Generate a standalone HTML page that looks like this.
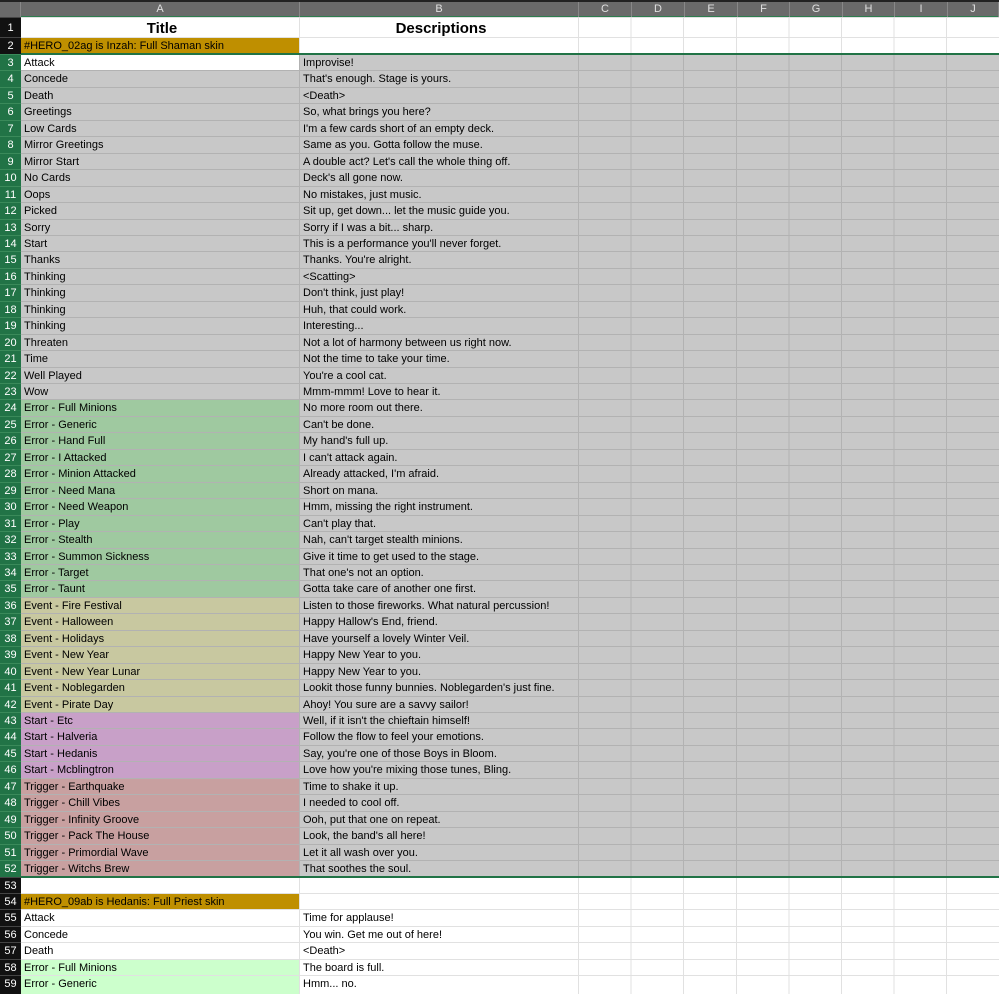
<!DOCTYPE html>
<html><head><meta charset="utf-8"><style>
*{margin:0;padding:0;box-sizing:border-box}
body{width:999px;height:994px;overflow:hidden;background:#fff;font-family:"Liberation Sans",sans-serif;font-size:11px;color:#000;position:relative}
#top{position:absolute;left:0;top:0;width:999px;height:2px;background:#222}
#hdr{position:absolute;left:0;top:2px;width:999px;height:15px;background:#6a6a6a;border-bottom:1px solid #2e7d4f;color:#e0e0e0;font-size:11px;line-height:15px}
#hdr div{position:absolute;top:0;height:15px;text-align:center;border-right:1px solid #888}
#corner{left:0;width:21px;background:#6a6a6a}
.r{position:absolute;left:0;width:999px;height:17px;display:flex;line-height:17px;white-space:nowrap}
.n{width:21px;flex:none;text-align:center;color:#fff;background:#111;box-shadow:inset 0 1px 0 #444;padding-top:1px}
.s .n{background:#217346;box-shadow:inset 0 1px 0 #3a8a5a}
.a,.b{flex:none;width:279px;padding-left:3px;padding-top:1px;overflow:hidden;box-shadow:inset -1px 1px 0 #e1e1e1}
.rest{flex:1;background:repeating-linear-gradient(to right,transparent 0 51.6px,#e1e1e1 51.6px 52.6px);box-shadow:inset 0 1px 0 #e1e1e1}
.s .a,.s .b{background:#c8c8c8;box-shadow:inset -1px 1px 0 #b2b2b2}
.s .rest{background:#c8c8c8 repeating-linear-gradient(to right,transparent 0 51.6px,#b2b2b2 51.6px 52.6px);box-shadow:inset 0 1px 0 #b2b2b2}
.s .a.wh{background:#fff}
.s .a.g{background:#9fc9a0}
.s .a.e{background:#c8c8a0}
.s .a.p{background:#c8a0c8}
.s .a.t{background:#c8a0a0}
.a.o{background:#bf8f00}
.a.lg{background:#ccffcc}
.line{position:absolute;left:21px;width:978px;height:2px;background:#217346}
</style></head><body>
<div id="top"></div>
<div id="hdr"><div id="corner"></div><div style="left:21px;width:279px">A</div><div style="left:300px;width:279px">B</div><div style="left:579px;width:53px">C</div><div style="left:632px;width:53px">D</div><div style="left:685px;width:53px">E</div><div style="left:738px;width:52px">F</div><div style="left:790px;width:53px">G</div><div style="left:843px;width:52px">H</div><div style="left:895px;width:53px">I</div><div style="left:948px;width:51px">J</div></div>

<div class="r" style="top:17px;height:21px;line-height:23px"><div class="n" style="padding-top:0">1</div><div class="a" style="text-align:center;font-weight:bold;font-size:15px;padding-top:0">Title</div><div class="b" style="text-align:center;font-weight:bold;font-size:15px;padding-top:0">Descriptions</div><div class="rest"></div></div>
<div class="r" style="top:37px"><div class="n">2</div><div class="a o">#HERO_02ag is Inzah: Full Shaman skin</div><div class="b"></div><div class="rest"></div></div>

<div class="r s" style="top:54px"><div class="n">3</div><div class="a wh">Attack</div><div class="b">Improvise!</div><div class="rest"></div></div>
<div class="r s" style="top:70px"><div class="n">4</div><div class="a">Concede</div><div class="b">That's enough. Stage is yours.</div><div class="rest"></div></div>
<div class="r s" style="top:87px"><div class="n">5</div><div class="a">Death</div><div class="b">&lt;Death&gt;</div><div class="rest"></div></div>
<div class="r s" style="top:103px"><div class="n">6</div><div class="a">Greetings</div><div class="b">So, what brings you here?</div><div class="rest"></div></div>
<div class="r s" style="top:120px"><div class="n">7</div><div class="a">Low Cards</div><div class="b">I'm a few cards short of an empty deck.</div><div class="rest"></div></div>
<div class="r s" style="top:136px"><div class="n">8</div><div class="a">Mirror Greetings</div><div class="b">Same as you. Gotta follow the muse.</div><div class="rest"></div></div>
<div class="r s" style="top:153px"><div class="n">9</div><div class="a">Mirror Start</div><div class="b">A double act? Let's call the whole thing off.</div><div class="rest"></div></div>
<div class="r s" style="top:169px"><div class="n">10</div><div class="a">No Cards</div><div class="b">Deck's all gone now.</div><div class="rest"></div></div>
<div class="r s" style="top:186px"><div class="n">11</div><div class="a">Oops</div><div class="b">No mistakes, just music.</div><div class="rest"></div></div>
<div class="r s" style="top:202px"><div class="n">12</div><div class="a">Picked</div><div class="b">Sit up, get down... let the music guide you.</div><div class="rest"></div></div>
<div class="r s" style="top:219px"><div class="n">13</div><div class="a">Sorry</div><div class="b">Sorry if I was a bit... sharp.</div><div class="rest"></div></div>
<div class="r s" style="top:235px"><div class="n">14</div><div class="a">Start</div><div class="b">This is a performance you'll never forget.</div><div class="rest"></div></div>
<div class="r s" style="top:251px"><div class="n">15</div><div class="a">Thanks</div><div class="b">Thanks. You're alright.</div><div class="rest"></div></div>
<div class="r s" style="top:268px"><div class="n">16</div><div class="a">Thinking</div><div class="b">&lt;Scatting&gt;</div><div class="rest"></div></div>
<div class="r s" style="top:284px"><div class="n">17</div><div class="a">Thinking</div><div class="b">Don't think, just play!</div><div class="rest"></div></div>
<div class="r s" style="top:301px"><div class="n">18</div><div class="a">Thinking</div><div class="b">Huh, that could work.</div><div class="rest"></div></div>
<div class="r s" style="top:317px"><div class="n">19</div><div class="a">Thinking</div><div class="b">Interesting...</div><div class="rest"></div></div>
<div class="r s" style="top:334px"><div class="n">20</div><div class="a">Threaten</div><div class="b">Not a lot of harmony between us right now.</div><div class="rest"></div></div>
<div class="r s" style="top:350px"><div class="n">21</div><div class="a">Time</div><div class="b">Not the time to take your time.</div><div class="rest"></div></div>
<div class="r s" style="top:367px"><div class="n">22</div><div class="a">Well Played</div><div class="b">You're a cool cat.</div><div class="rest"></div></div>
<div class="r s" style="top:383px"><div class="n">23</div><div class="a">Wow</div><div class="b">Mmm-mmm! Love to hear it.</div><div class="rest"></div></div>
<div class="r s" style="top:399px"><div class="n">24</div><div class="a g">Error - Full Minions</div><div class="b">No more room out there.</div><div class="rest"></div></div>
<div class="r s" style="top:416px"><div class="n">25</div><div class="a g">Error - Generic</div><div class="b">Can't be done.</div><div class="rest"></div></div>
<div class="r s" style="top:432px"><div class="n">26</div><div class="a g">Error - Hand Full</div><div class="b">My hand's full up.</div><div class="rest"></div></div>
<div class="r s" style="top:449px"><div class="n">27</div><div class="a g">Error - I Attacked</div><div class="b">I can't attack again.</div><div class="rest"></div></div>
<div class="r s" style="top:465px"><div class="n">28</div><div class="a g">Error - Minion Attacked</div><div class="b">Already attacked, I'm afraid.</div><div class="rest"></div></div>
<div class="r s" style="top:482px"><div class="n">29</div><div class="a g">Error - Need Mana</div><div class="b">Short on mana.</div><div class="rest"></div></div>
<div class="r s" style="top:498px"><div class="n">30</div><div class="a g">Error - Need Weapon</div><div class="b">Hmm, missing the right instrument.</div><div class="rest"></div></div>
<div class="r s" style="top:515px"><div class="n">31</div><div class="a g">Error - Play</div><div class="b">Can't play that.</div><div class="rest"></div></div>
<div class="r s" style="top:531px"><div class="n">32</div><div class="a g">Error - Stealth</div><div class="b">Nah, can't target stealth minions.</div><div class="rest"></div></div>
<div class="r s" style="top:548px"><div class="n">33</div><div class="a g">Error - Summon Sickness</div><div class="b">Give it time to get used to the stage.</div><div class="rest"></div></div>
<div class="r s" style="top:564px"><div class="n">34</div><div class="a g">Error - Target</div><div class="b">That one's not an option.</div><div class="rest"></div></div>
<div class="r s" style="top:580px"><div class="n">35</div><div class="a g">Error - Taunt</div><div class="b">Gotta take care of another one first.</div><div class="rest"></div></div>
<div class="r s" style="top:597px"><div class="n">36</div><div class="a e">Event - Fire Festival</div><div class="b">Listen to those fireworks. What natural percussion!</div><div class="rest"></div></div>
<div class="r s" style="top:613px"><div class="n">37</div><div class="a e">Event - Halloween</div><div class="b">Happy Hallow's End, friend.</div><div class="rest"></div></div>
<div class="r s" style="top:630px"><div class="n">38</div><div class="a e">Event - Holidays</div><div class="b">Have yourself a lovely Winter Veil.</div><div class="rest"></div></div>
<div class="r s" style="top:646px"><div class="n">39</div><div class="a e">Event - New Year</div><div class="b">Happy New Year to you.</div><div class="rest"></div></div>
<div class="r s" style="top:663px"><div class="n">40</div><div class="a e">Event - New Year Lunar</div><div class="b">Happy New Year to you.</div><div class="rest"></div></div>
<div class="r s" style="top:679px"><div class="n">41</div><div class="a e">Event - Noblegarden</div><div class="b">Lookit those funny bunnies. Noblegarden's just fine.</div><div class="rest"></div></div>
<div class="r s" style="top:696px"><div class="n">42</div><div class="a e">Event - Pirate Day</div><div class="b">Ahoy! You sure are a savvy sailor!</div><div class="rest"></div></div>
<div class="r s" style="top:712px"><div class="n">43</div><div class="a p">Start - Etc</div><div class="b">Well, if it isn't the chieftain himself!</div><div class="rest"></div></div>
<div class="r s" style="top:728px"><div class="n">44</div><div class="a p">Start - Halveria</div><div class="b">Follow the flow to feel your emotions.</div><div class="rest"></div></div>
<div class="r s" style="top:745px"><div class="n">45</div><div class="a p">Start - Hedanis</div><div class="b">Say, you're one of those Boys in Bloom.</div><div class="rest"></div></div>
<div class="r s" style="top:761px"><div class="n">46</div><div class="a p">Start - Mcblingtron</div><div class="b">Love how you're mixing those tunes, Bling.</div><div class="rest"></div></div>
<div class="r s" style="top:778px"><div class="n">47</div><div class="a t">Trigger - Earthquake</div><div class="b">Time to shake it up.</div><div class="rest"></div></div>
<div class="r s" style="top:794px"><div class="n">48</div><div class="a t">Trigger - Chill Vibes</div><div class="b">I needed to cool off.</div><div class="rest"></div></div>
<div class="r s" style="top:811px"><div class="n">49</div><div class="a t">Trigger - Infinity Groove</div><div class="b">Ooh, put that one on repeat.</div><div class="rest"></div></div>
<div class="r s" style="top:827px"><div class="n">50</div><div class="a t">Trigger - Pack The House</div><div class="b">Look, the band's all here!</div><div class="rest"></div></div>
<div class="r s" style="top:844px"><div class="n">51</div><div class="a t">Trigger - Primordial Wave</div><div class="b">Let it all wash over you.</div><div class="rest"></div></div>
<div class="r s" style="top:860px"><div class="n">52</div><div class="a t">Trigger - Witchs Brew</div><div class="b">That soothes the soul.</div><div class="rest"></div></div>
<div class="r" style="top:877px"><div class="n">53</div><div class="a"></div><div class="b"></div><div class="rest"></div></div>
<div class="r" style="top:893px"><div class="n">54</div><div class="a o">#HERO_09ab is Hedanis: Full Priest skin</div><div class="b"></div><div class="rest"></div></div>
<div class="r" style="top:909px"><div class="n">55</div><div class="a">Attack</div><div class="b">Time for applause!</div><div class="rest"></div></div>
<div class="r" style="top:926px"><div class="n">56</div><div class="a">Concede</div><div class="b">You win. Get me out of here!</div><div class="rest"></div></div>
<div class="r" style="top:942px"><div class="n">57</div><div class="a">Death</div><div class="b">&lt;Death&gt;</div><div class="rest"></div></div>
<div class="r" style="top:959px"><div class="n">58</div><div class="a lg">Error - Full Minions</div><div class="b">The board is full.</div><div class="rest"></div></div>
<div class="r" style="top:975px;height:19px"><div class="n">59</div><div class="a lg">Error - Generic</div><div class="b">Hmm... no.</div><div class="rest"></div></div>

<div class="line" style="top:53px"></div>
<div class="line" style="top:876px"></div>
</body></html>
